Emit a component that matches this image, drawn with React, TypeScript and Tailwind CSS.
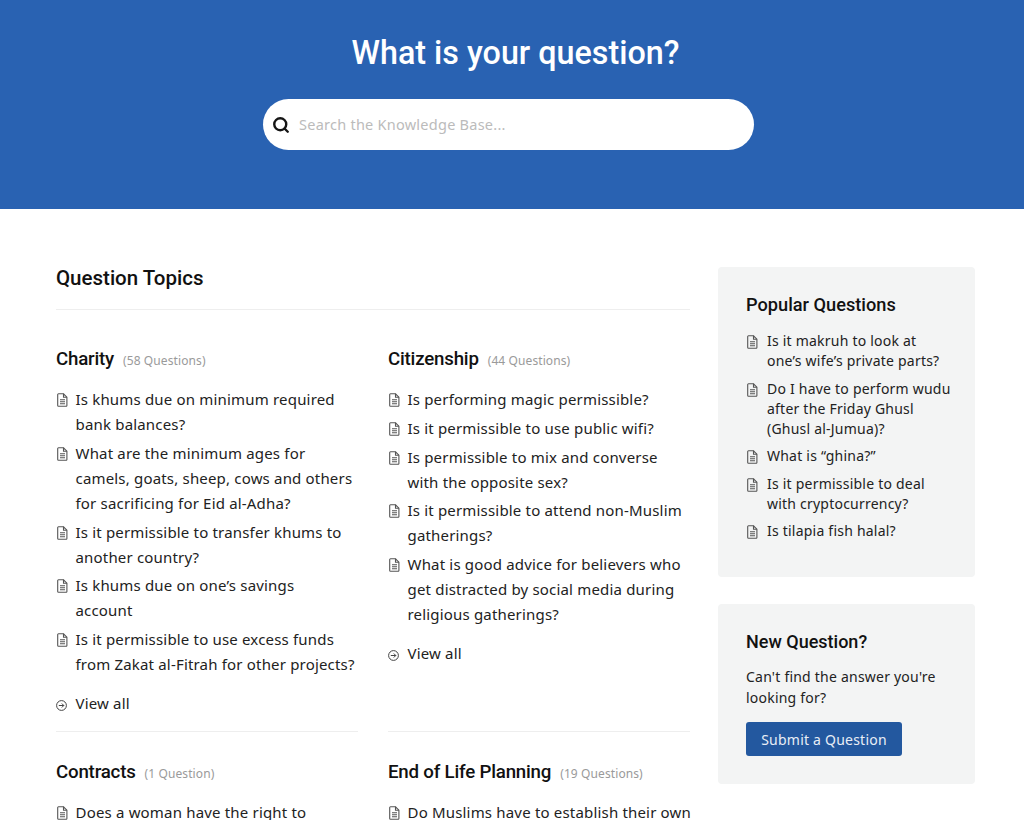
import { Search } from "lucide-react";

type Topic = {
    name: string;
    count: string;
    questions: string[];
    viewAll?: boolean;
};

const topics: Topic[] = [
    {
        name: "Charity",
        count: "(58 Questions)",
        viewAll: true,
        questions: [
            "Is khums due on minimum required bank balances?",
            "What are the minimum ages for camels, goats, sheep, cows and others for sacrificing for Eid al-Adha?",
            "Is it permissible to transfer khums to another country?",
            "Is khums due on one’s savings\naccount",
            "Is it permissible to use excess funds from Zakat al-Fitrah for other projects?",
        ],
    },
    {
        name: "Citizenship",
        count: "(44 Questions)",
        viewAll: true,
        questions: [
            "Is performing magic permissible?",
            "Is it permissible to use public wifi?",
            "Is permissible to mix and converse\nwith the opposite sex?",
            "Is it permissible to attend non-Muslim gatherings?",
            "What is good advice for believers who get distracted by social media during religious gatherings?",
        ],
    },
    {
        name: "Contracts",
        count: "(1 Question)",
        questions: ["Does a woman have the right to stipulate conditions in her contract?"],
    },
    {
        name: "End of Life Planning",
        count: "(19 Questions)",
        questions: ["Do Muslims have to establish their own cemeteries?"],
    },
];

const popular = [
    "Is it makruh to look at one’s wife’s private parts?",
    "Do I have to perform wudu after the Friday Ghusl\n(Ghusl al-Jumua)?",
    "What is “ghina?”",
    "Is it permissible to deal with cryptocurrency?",
    "Is tilapia fish halal?",
];

// Icone de documento usado antes de cada pergunta
function DocIcon() {
    return (
        <svg width="11" height="14" viewBox="0 0 11 14" fill="none" stroke="#555" strokeWidth="1.1" className="shrink-0">
            <path d="M1.5.8h5l3.4 3.4v8.3a.8.8 0 0 1-.8.8H1.5a.8.8 0 0 1-.8-.8V1.6a.8.8 0 0 1 .8-.8z" />
            <path d="M6.5.8v3.4h3.4M3 6.8h5M3 8.8h5M3 10.8h5" />
        </svg>
    );
}

function ArrowIcon() {
    return (
        <svg width="11" height="11" viewBox="0 0 11 11" fill="none" stroke="#444" strokeWidth="1" className="shrink-0">
            <circle cx="5.5" cy="5.5" r="4.9" />
            <path d="M2.8 5.5h5M5.8 3.5l2 2-2 2" />
        </svg>
    );
}

function TopicBlock({ topic }: { topic: Topic }) {
    return (
        <div>
            <h3 className="flex items-baseline text-[#111] text-[18.7px] leading-[28px] font-medium font-['Roboto',sans-serif] tracking-[-0.2px]">
                {topic.name}
                <span className="ml-[9px] text-[12px] font-normal text-[#9a9a9a] font-['Noto_Sans',sans-serif] tracking-[0.1px]">{topic.count}</span>
            </h3>
            <ul className="mt-[12px] flex flex-col gap-[3.75px]">
                {topic.questions.map((question) => (
                    <li key={question} className="flex text-[15px] leading-[25px] text-[#222] tracking-[0.18px]">
                        <span className="w-[19.5px] shrink-0 pt-[6px] pl-[1px]"><DocIcon /></span>
                        <span className="whitespace-pre-line -mr-[3px]">{question}</span>
                    </li>
                ))}
            </ul>
            {topic.viewAll && (
                <div className="mt-[14px] flex items-center text-[15px] leading-[25px] text-[#222] tracking-[0.18px]">
                    <span className="w-[19.5px] shrink-0 pt-[3px]"><ArrowIcon /></span>
                    View all
                </div>
            )}
        </div>
    );
}

export default function App() {
    return (
        <div className="h-[820px] overflow-hidden bg-white font-['Noto_Sans',sans-serif]">
            <header className="h-[209px] bg-[#2962b2] pt-[33px] flex flex-col items-center">
                <h1 className="ml-[7px] text-[32.3px] leading-[40px] font-medium text-white font-['Roboto',sans-serif]">What is your question?</h1>
                <div className="mt-[26px] mr-[7px] w-[491px] h-[51px] rounded-full bg-white flex items-center pl-[9px]">
                    <Search size={18} strokeWidth={3.2} className="text-[#151515]" />
                    <span className="ml-[9px] text-[14.5px] text-[#bbbbbb] tracking-[0.25px]">Search the Knowledge Base...</span>
                </div>
            </header>

            <main className="flex gap-[28px] pl-[56px] pr-[49px] pt-[57px]">
                <section className="w-[634px] shrink-0">
                    <h2 className="text-[20.5px] leading-[24px] font-medium text-[#111] font-['Roboto',sans-serif] pb-[19px] border-b border-[#eeeeee]">Question Topics</h2>
                    <div className="mt-[35px] grid grid-cols-2 gap-x-[30px]">
                        <div className="h-[387px] border-b border-[#eeeeee]"><TopicBlock topic={topics[0]} /></div>
                        <div className="h-[387px] border-b border-[#eeeeee]"><TopicBlock topic={topics[1]} /></div>
                        <div className="pt-[26px]"><TopicBlock topic={topics[2]} /></div>
                        <div className="pt-[26px]"><TopicBlock topic={topics[3]} /></div>
                    </div>
                </section>

                <aside className="flex-1 flex flex-col gap-[27px] pt-[1px]">
                    <div className="h-[310px] rounded-[4px] bg-[#f3f4f4] pl-[28px] pr-[24px] pt-[25px]">
                        <h3 className="text-[18.2px] leading-[26px] font-medium text-[#111] font-['Roboto',sans-serif]">Popular Questions</h3>
                        <ul className="mt-[13px] flex flex-col gap-[7.5px]">
                            {popular.map((question) => (
                                <li key={question} className="flex text-[14px] leading-[20px] text-[#222] tracking-[0.22px]">
                                    <span className="w-[21px] shrink-0 pt-[4px] pl-[1px]"><DocIcon /></span>
                                    <span className="whitespace-pre-line">{question}</span>
                                </li>
                            ))}
                        </ul>
                    </div>
                    <div className="h-[180px] rounded-[4px] bg-[#f3f4f4] px-[28px] pt-[25px]">
                        <h3 className="text-[18px] leading-[26px] font-medium text-[#111] font-['Roboto',sans-serif]">New Question?</h3>
                        <p className="mt-[12px] text-[14px] leading-[20.5px] text-[#222] tracking-[0.22px]">Can't find the answer you're looking for?</p>
                        <div className="mt-[14px] w-[156px] h-[34px] rounded-[3px] bg-[#23589f] flex items-center justify-center text-[14px] text-[#e8eef6] tracking-[0.22px]">Submit a Question</div>
                    </div>
                </aside>
            </main>
        </div>
    );
}
